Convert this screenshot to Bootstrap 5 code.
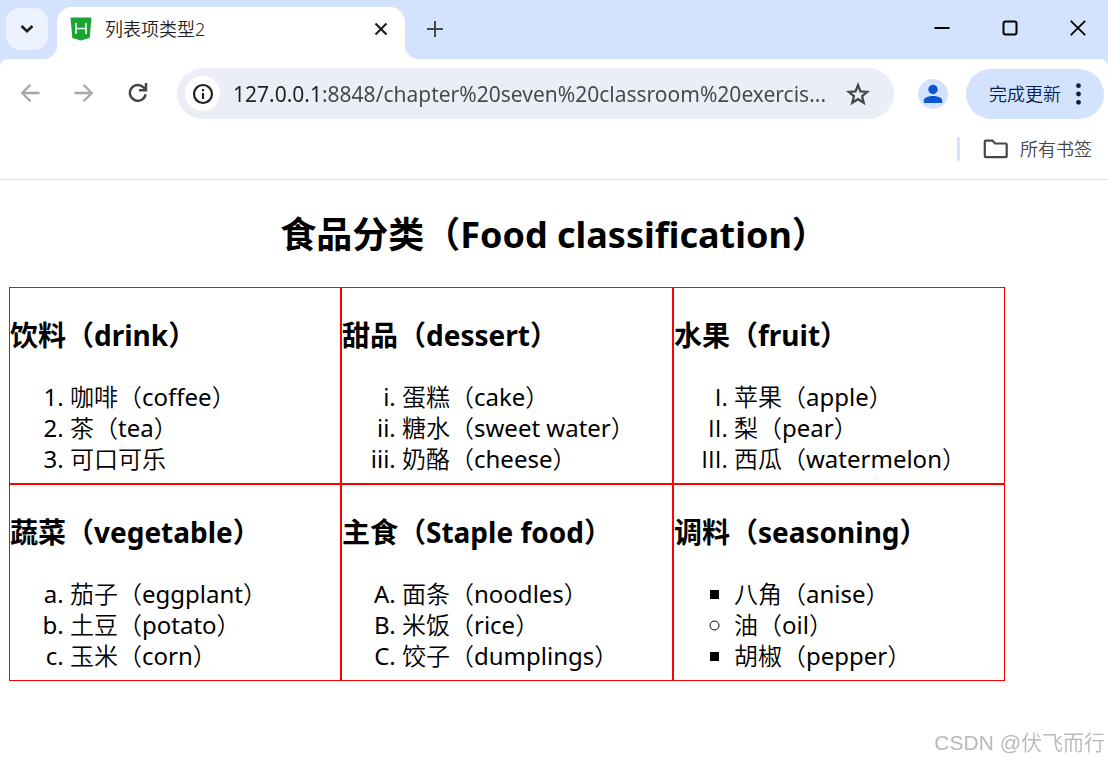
<!DOCTYPE html>
<html lang="zh-CN">
<head>
<meta charset="utf-8">
<meta name="viewport" content="width=device-width, initial-scale=1">
<title>列表项类型2</title>
<link href="https://cdn.jsdelivr.net/npm/bootstrap@5.3.0/dist/css/bootstrap.min.css" rel="stylesheet">
<style>
  body { font-family: "Noto Sans", "Noto Sans CJK SC", sans-serif; color: #000; background: #fff; font-size: 24px; line-height: 31px; }
  .chrome { background: #d3e3fd; font-size: 18px; line-height: 24px; font-weight: 350; }
  .chrome button { border: 0; background: none; padding: 0; color: #1f1f1f; display: flex; align-items: center; justify-content: center; flex: none; font-weight: 350; }
  svg { display: block; flex: none; }
  .tabstrip { height: 59px; padding-right: 21px; }
  .tabstrip .tab-search { width: 42px; height: 42px; margin: 8px 9px 9px 6px; border-radius: 14px; background: #ecf2fe; }
  .tab-current { position: relative; width: 348px; height: 52px; background: #fff; border-radius: 15px 15px 0 0; padding: 0 15px 8px 13px; }
  .tab-current::before, .tab-current::after { content: ""; position: absolute; bottom: 0; width: 15px; height: 15px; }
  .tab-current::before { left: -15px; background: radial-gradient(circle at 0 0, transparent 15px, #fff 16px); }
  .tab-current::after { right: -15px; background: radial-gradient(circle at 100% 0, transparent 15px, #fff 16px); }
  .tab-current button, .win-buttons button { width: 18px; height: 24px; }
  .tab-title { margin-left: 13px; color: #1f1f1f; }
  .new-tab { width: 40px; height: 40px; margin: 0 0 1px 10px; }
  .win-buttons { gap: 50px; padding-bottom: 3px; }
  .toolbar { background: #fff; border-radius: 8px 8px 0 0; padding: 9px 4px 9px 18px; }
  .nav-buttons { gap: 30px; margin-right: 27px; padding-bottom: 1px; }
  .nav-buttons button { width: 24px; height: 24px; }
  .omnibox { height: 51px; border-radius: 26px; background: #ebeef7; padding: 0 24px 0 8px; min-width: 0; }
  .site-info { width: 35px; height: 35px; border-radius: 50%; background: #fff !important; }
  .address { border: 0; outline: 0; padding: 0; margin-left: 13px; min-width: 0; font-size: 21px; line-height: 30px; font-weight: 400; color: transparent; text-overflow: ellipsis;
    background: linear-gradient(90deg, #1f1f1f 89px, #474747 89px); -webkit-background-clip: text; background-clip: text; }
  .profile { width: 30px; height: 30px; border-radius: 50%; background: #d3e3fd !important; margin: 0 18px 0 24px; }
  .chrome .update { height: 50px; border-radius: 25px; background: #d3e3fd; color: #041e49; padding: 0 23px; gap: 15px; }
  .bookmarks { background: #fff; height: 52px; border-bottom: 1px solid #dcdddf; padding: 0 16px 9px 0; gap: 23px; }
  .divider { width: 3px; height: 24px; border-radius: 2px; background: #d3e3fd; }
  .bookmarks button { gap: 12px; color: #474747; }
  .page { padding: 31px 9px 0; }
  .page h1 { font-size: 36px; line-height: 48px; font-weight: 700; margin: 0 0 28px; text-align: center; }
  .food-grid { max-width: 996px; }
  .food { border: 1px solid red; padding-bottom: 9px; }
  .food h2 { font-size: 28px; line-height: 37px; font-weight: 700; margin: 29px 0 27px; }
  .food ol, .food ul { margin: 0; padding-left: 60px; font-weight: 400; }
  .cjk { font-weight: 350; }
  .list-roman-low { list-style-type: lower-roman; }
  .list-roman-up { list-style-type: upper-roman; }
  .list-roman-up li::marker { font-family: "Open Sans", sans-serif; }
  .list-alpha-low { list-style-type: lower-alpha; }
  .list-alpha-up { list-style-type: upper-alpha; }
  .item-square { list-style-type: square; }
  .item-circle { list-style-type: circle; }
  .watermark { position: fixed; right: 3px; bottom: 4px; font-family: "Liberation Sans", "Noto Sans CJK SC", sans-serif; font-weight: 350; font-size: 21px; color: #b8b8b8; }
</style>
</head>
<body>
<header class="chrome">
  <div class="tabstrip d-flex align-items-end">
    <button type="button" class="tab-search" aria-label="搜索标签页"><svg width="14" height="10" viewBox="0 0 14 10" fill="none" stroke="#1f1f1f" stroke-width="2.6"><path d="M1.5 2 7 7.3 12.500 2"/></svg></button>
    <div class="tab-current d-flex align-items-center">
      <svg width="22" height="24" viewBox="0 0 22 24"><path fill="#1da334" d="M.5.500h21L19.700 21 11 23.500 2.300 21z"/><path d="M6 6v11M16 6v11M6 11.500h10" stroke="#e9ffed" stroke-width="1.700" fill="none"/></svg>
      <span class="tab-title flex-grow-1">列表项类型2</span>
      <button type="button" aria-label="关闭标签页"><svg width="14" height="14" viewBox="0 0 14 14" stroke="#1f1f1f" stroke-width="2.200"><path d="m1.500 1.500 11 11M12.500 1.500l-11 11"/></svg></button>
    </div>
    <div class="d-flex align-items-center align-self-stretch flex-grow-1">
      <button type="button" class="new-tab" aria-label="新建标签页"><svg width="16" height="16" viewBox="0 0 16 16" stroke="#474747" stroke-width="2"><path d="M8 0v16M0 8h16"/></svg></button>
      <div class="win-buttons d-flex ms-auto">
        <button type="button" aria-label="最小化"><svg width="16" height="16" viewBox="0 0 16 16" stroke="#000" stroke-width="2"><path d="M.5 8h15"/></svg></button>
        <button type="button" aria-label="最大化"><svg width="16" height="16" viewBox="0 0 16 16" fill="none" stroke="#000" stroke-width="2"><rect x="1.500" y="1.500" width="13" height="13" rx="2"/></svg></button>
        <button type="button" aria-label="关闭"><svg width="16" height="16" viewBox="0 0 16 16" stroke="#000" stroke-width="1.800"><path d="m.8.8 14.400 14.400M15.200.8.8 15.200"/></svg></button>
      </div>
    </div>
  </div>
  <div class="toolbar d-flex align-items-center">
    <div class="nav-buttons d-flex">
      <button type="button" aria-label="后退"><svg width="20" height="20" viewBox="0 0 20 20" fill="none" stroke="#a8a8a8" stroke-width="2.300"><path d="M19.500 10H2.500M10.500 1.700 2.200 10l8.300 8.300"/></svg></button>
      <button type="button" aria-label="前进"><svg width="20" height="20" viewBox="0 0 20 20" fill="none" stroke="#a8a8a8" stroke-width="2.300"><path d="M.5 10h17M9.500 1.700l8.300 8.300-8.300 8.300"/></svg></button>
      <button type="button" aria-label="重新加载"><svg width="20" height="20" viewBox="0 0 20 20" fill="none" stroke="#474747" stroke-width="2.500"><path d="M17.600 11.200A7.900 7.900 0 1 1 15.500 4.400l2.300 2.300M18 0v7.300h-7"/></svg></button>
    </div>
    <div class="omnibox d-flex align-items-center flex-grow-1">
      <button type="button" class="site-info" aria-label="查看网站信息"><svg width="22" height="22" viewBox="0 0 22 22" fill="none" stroke="#1f1f1f" stroke-width="2.200"><circle cx="11" cy="11" r="9"/><path d="M11 10v6M11 6v2.200"/></svg></button>
      <input class="address flex-grow-1" type="text" aria-label="地址栏" value="127.0.0.1:8848/chapter%20seven%20classroom%20exercis...">
      <button type="button" aria-label="添加书签"><svg width="24" height="24" viewBox="0 0 24 24" fill="none" stroke="#474747" stroke-width="2.300"><path d="m12 3.200 2.500 6.200 6.700.5-5.100 4.300 1.600 6.500L12 17.200l-5.700 3.500 1.600-6.500L2.800 9.900l6.700-.5z"/></svg></button>
    </div>
    <button type="button" class="profile" aria-label="个人资料"><svg width="20" height="20" viewBox="0 0 20 20" fill="#0b57d0"><circle cx="10" cy="5.500" r="4.700"/><path d="M.8 19v-2.500c0-6 18.400-6 18.400 0V19z"/></svg></button>
    <button type="button" class="update">完成更新<svg width="5" height="22" viewBox="0 0 5 22" fill="#041e49"><circle cx="2.500" cy="2.700" r="2.400"/><circle cx="2.500" cy="11" r="2.400"/><circle cx="2.500" cy="19.300" r="2.400"/></svg></button>
  </div>
  <div class="bookmarks d-flex align-items-center justify-content-end">
    <span class="divider"></span>
    <button type="button"><svg width="25" height="20" viewBox="0 0 25 20" fill="none" stroke="#474747" stroke-width="2.200"><path d="M2.800 1.600h6.700l2.600 2.900h10.600q1 0 1 1v11.700q0 1-1 1H2.800q-1 0-1-1V2.600q0-1 1-1z"/></svg>所有书签</button>
  </div>
</header>
<main class="page">
  <h1>食品分类（Food classification）</h1>
  <div class="food-grid row row-cols-3 g-0">
    <section class="food col"><h2>饮料（drink）</h2>
      <ol><li><span class="cjk">咖啡（</span>coffee<span class="cjk">）</span></li><li><span class="cjk">茶（</span>tea<span class="cjk">）</span></li><li><span class="cjk">可口可乐</span></li></ol></section>
    <section class="food col"><h2>甜品（dessert）</h2>
      <ol class="list-roman-low"><li><span class="cjk">蛋糕（</span>cake<span class="cjk">）</span></li><li><span class="cjk">糖水（</span>sweet water<span class="cjk">）</span></li><li><span class="cjk">奶酪（</span>cheese<span class="cjk">）</span></li></ol></section>
    <section class="food col"><h2>水果（fruit）</h2>
      <ol class="list-roman-up"><li><span class="cjk">苹果（</span>apple<span class="cjk">）</span></li><li><span class="cjk">梨（</span>pear<span class="cjk">）</span></li><li><span class="cjk">西瓜（</span>watermelon<span class="cjk">）</span></li></ol></section>
    <section class="food col"><h2>蔬菜（vegetable）</h2>
      <ol class="list-alpha-low"><li><span class="cjk">茄子（</span>eggplant<span class="cjk">）</span></li><li><span class="cjk">土豆（</span>potato<span class="cjk">）</span></li><li><span class="cjk">玉米（</span>corn<span class="cjk">）</span></li></ol></section>
    <section class="food col"><h2>主食（Staple food）</h2>
      <ol class="list-alpha-up"><li><span class="cjk">面条（</span>noodles<span class="cjk">）</span></li><li><span class="cjk">米饭（</span>rice<span class="cjk">）</span></li><li><span class="cjk">饺子（</span>dumplings<span class="cjk">）</span></li></ol></section>
    <section class="food col"><h2>调料（seasoning）</h2>
      <ul><li class="item-square"><span class="cjk">八角（</span>anise<span class="cjk">）</span></li><li class="item-circle"><span class="cjk">油（</span>oil<span class="cjk">）</span></li><li class="item-square"><span class="cjk">胡椒（</span>pepper<span class="cjk">）</span></li></ul></section>
  </div>
</main>
<div class="watermark">CSDN @伏飞而行</div>
<script src="https://cdn.jsdelivr.net/npm/bootstrap@5.3.0/dist/js/bootstrap.bundle.min.js"></script>
</body>
</html>
